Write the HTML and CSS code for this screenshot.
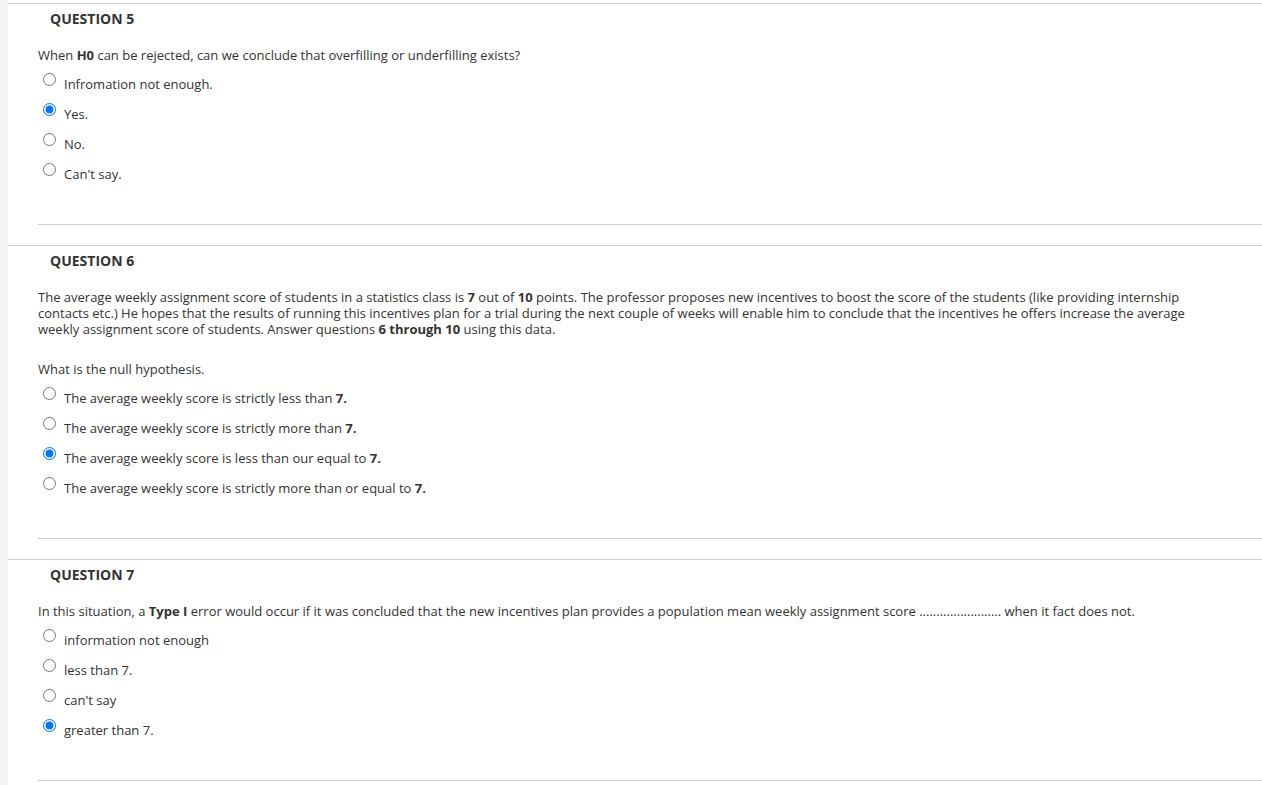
FILE: index.html
```html
<!DOCTYPE html>
<html>
<head>
<meta charset="utf-8">
<link rel="stylesheet" href="styles.css">
</head>
<body>
<div class="page">
  <div class="rail"></div>
  <main class="content">
    <section class="question">
      <h3 class="q-title">QUESTION 5</h3>
      <div class="q-body">
        <p class="q-text">When <b>H0</b> can be rejected, can we conclude that overfilling or underfilling exists?</p>
        <div class="options">
          <label class="option"><input type="radio" name="q5"><span>Infromation not enough.</span></label>
          <label class="option"><input type="radio" name="q5" checked><span>Yes.</span></label>
          <label class="option"><input type="radio" name="q5"><span>No.</span></label>
          <label class="option"><input type="radio" name="q5"><span>Can't say.</span></label>
        </div>
        <div class="q-foot"></div>
      </div>
    </section>

    <section class="question">
      <h3 class="q-title">QUESTION 6</h3>
      <div class="q-body">
        <p class="q-para">The average weekly assignment score of students in a statistics class is <b>7</b> out of <b>10</b> points. The professor proposes new incentives to boost the score of the students (like providing internship contacts etc.) He hopes that the results of running this incentives plan for a trial during the next couple of weeks will enable him to conclude that the incentives he offers increase the average weekly assignment score of students. Answer questions <b>6 through 10</b> using this data.</p>
        <p class="q-text">What is the null hypothesis.</p>
        <div class="options">
          <label class="option"><input type="radio" name="q6"><span>The average weekly score is strictly less than <b>7.</b></span></label>
          <label class="option"><input type="radio" name="q6"><span>The average weekly score is strictly more than <b>7.</b></span></label>
          <label class="option"><input type="radio" name="q6" checked><span>The average weekly score is less than our equal to <b>7.</b></span></label>
          <label class="option"><input type="radio" name="q6"><span>The average weekly score is strictly more than or equal to <b>7.</b></span></label>
        </div>
        <div class="q-foot"></div>
      </div>
    </section>

    <section class="question">
      <h3 class="q-title">QUESTION 7</h3>
      <div class="q-body">
        <p class="q-text">In this situation, a <b>Type I</b> error would occur if it was concluded that the new incentives plan provides a population mean weekly assignment score ........................ when it fact does not.</p>
        <div class="options">
          <label class="option"><input type="radio" name="q7"><span>information not enough</span></label>
          <label class="option"><input type="radio" name="q7"><span>less than 7.</span></label>
          <label class="option"><input type="radio" name="q7"><span>can't say</span></label>
          <label class="option"><input type="radio" name="q7" checked><span>greater than 7.</span></label>
        </div>
        <div class="q-foot"></div>
      </div>
    </section>
  </main>
</div>
</body>
</html>
```

FILE: styles.css
```css
html, body {
  margin: 0;
  padding: 0;
  background: #ffffff;
}

body {
  font-family: "Open Sans", "Liberation Sans", sans-serif;
  font-size: 13px;
  color: #333333;
}

.page {
  display: flex;
  min-height: 785px;
}

.rail {
  width: 8px;
  flex: 0 0 8px;
  background: #f4f4f4;
}

.content {
  flex: 1;
  padding-top: 3px;
  background: #ffffff;
}

.question {
  border-top: 1px solid #cdcdcd;
  padding-top: 7px;
  padding-bottom: 20px;
}

.q-title {
  margin: 0 0 20px 42px;
  font-size: 14px;
  line-height: 16px;
  font-weight: 700;
  color: #333333;
}

.q-body {
  padding-left: 30px;
}

.q-para {
  margin: 0 50px 24px 0;
  line-height: 16px;
}

.q-text {
  margin: 0 0 7px 0;
  line-height: 16px;
}

.options {
  display: flex;
  flex-direction: column;
}

.option {
  display: flex;
  align-items: flex-start;
  height: 30px;
  box-sizing: border-box;
  padding-top: 6px;
  line-height: 16px;
}

.option input {
  width: 13px;
  height: 13px;
  margin: -3px 8px 0 5px;
  flex: 0 0 auto;
}

.q-foot {
  margin-top: 34px;
  border-top: 1px solid #cdcdcd;
}
```
